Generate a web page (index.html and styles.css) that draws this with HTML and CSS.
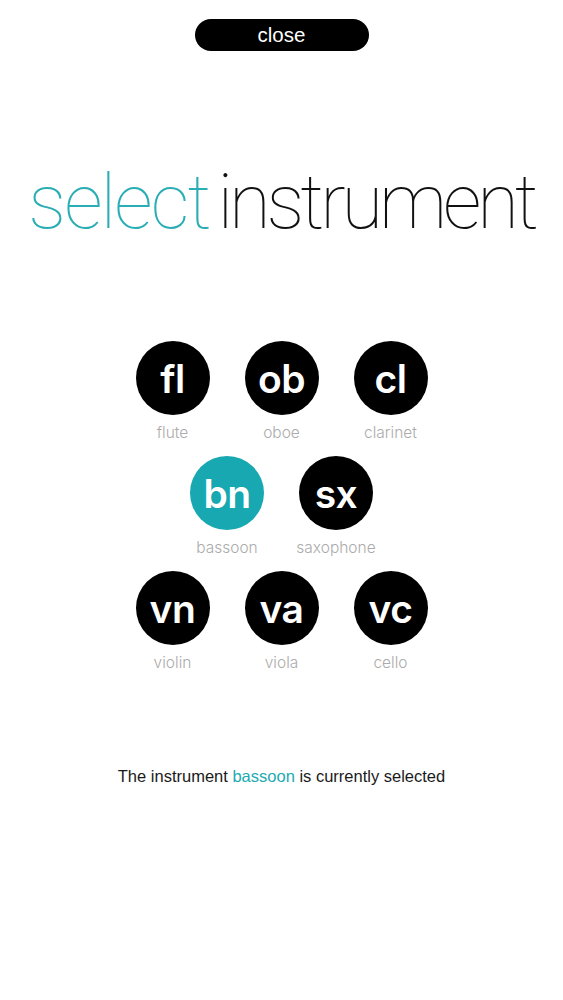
FILE: index.html
```html
<!DOCTYPE html>
<html>
<head>
<meta charset="utf-8">
<link rel="stylesheet" href="styles.css">
</head>
<body>
<div class="page">
  <button class="close-btn">close</button>
  <h1 class="title"><span class="accent">select</span><span class="dark">instrument</span></h1>
  <div class="instruments">
    <div class="row">
      <div class="inst"><div class="circle">fl</div><div class="label">flute</div></div>
      <div class="inst"><div class="circle">ob</div><div class="label">oboe</div></div>
      <div class="inst"><div class="circle">cl</div><div class="label">clarinet</div></div>
    </div>
    <div class="row">
      <div class="inst"><div class="circle selected">bn</div><div class="label">bassoon</div></div>
      <div class="inst"><div class="circle">sx</div><div class="label">saxophone</div></div>
    </div>
    <div class="row">
      <div class="inst"><div class="circle">vn</div><div class="label">violin</div></div>
      <div class="inst"><div class="circle">va</div><div class="label">viola</div></div>
      <div class="inst"><div class="circle">vc</div><div class="label">cello</div></div>
    </div>
  </div>
  <p class="status">The instrument <span class="hl">bassoon</span> is currently selected</p>
</div>
</body>
</html>
```

FILE: styles.css
```css
html, body {
  margin: 0;
  padding: 0;
  background: #ffffff;
}
.page {
  display: flex;
  flex-direction: column;
  align-items: center;
  font-family: "Liberation Sans", Arial, sans-serif;
}
.close-btn {
  margin-top: 19px;
  width: 174px;
  height: 32px;
  border: none;
  border-radius: 16px;
  background: #000;
  color: #fff;
  font-family: "Liberation Sans", Arial, sans-serif;
  font-size: 20.5px;
  line-height: 32px;
  padding: 0;
}
.title {
  margin: 113px 0 0 0;
  font-family: "Roboto", sans-serif;
  font-weight: 100;
  font-size: 76px;
  line-height: 76px;
  white-space: nowrap;
  display: flex;
  gap: 8px;
}
.accent { color: #2aadb4; letter-spacing: -1.9px; }
.dark { color: #111; letter-spacing: -4.1px; }
.instruments {
  margin-top: 101px;
  display: flex;
  flex-direction: column;
  gap: 14px;
}
.row {
  display: flex;
  justify-content: center;
  gap: 35px;
}
.inst {
  width: 74px;
  display: flex;
  flex-direction: column;
  align-items: center;
}
.circle {
  width: 74px;
  height: 74px;
  border-radius: 50%;
  background: #000;
  color: #fff;
  display: flex;
  align-items: center;
  justify-content: center;
  font-family: "Inter", sans-serif;
  font-weight: 560;
  font-size: 39px;
  letter-spacing: -0.5px;
}
.circle.selected { background: #17a8b1; }
.label {
  margin-top: 8px;
  font-family: "Inter", sans-serif;
  font-weight: 300;
  font-size: 15.5px;
  line-height: 19px;
  color: #ababab;
  white-space: nowrap;
}
.status {
  margin: 94px 0 0 0;
  font-size: 16.5px;
  line-height: 20px;
  color: #1a1a1a;
}
.hl { color: #22aab2; }
```
